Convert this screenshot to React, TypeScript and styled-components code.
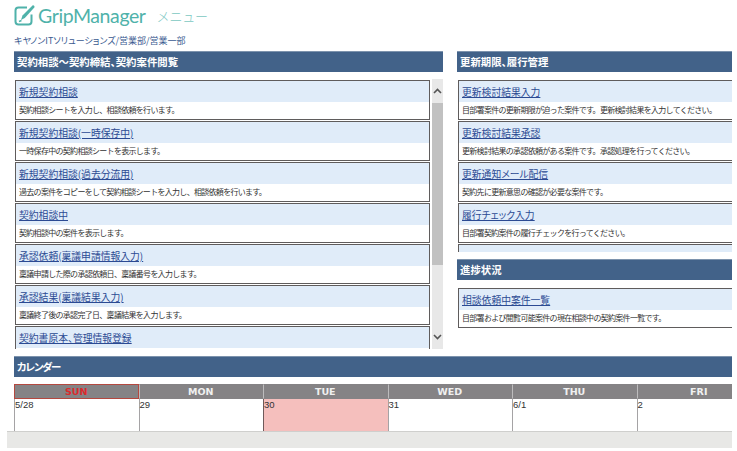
import React from 'react';
import styled, { createGlobalStyle } from 'styled-components';

const GlobalStyle = createGlobalStyle`
    html, body {
        background: #fff;
        margin: 0;
        overflow: hidden;
        padding: 0;
    }
    body {
        font-family: "Noto Sans CJK JP", "Liberation Sans", sans-serif;
    }
`;

const StyledPage = styled.div`
    height: 451px;
    overflow: hidden;
    padding-left: 7px;
    width: 725px;
`;

const StyledMain = styled.div`
    height: 431px;
    overflow: hidden;
    padding-left: 7px;
`;

const StyledBrand = styled.div`
    align-items: center;
    box-sizing: border-box;
    display: flex;
    height: 31px;
    padding-bottom: 1px;
`;

const StyledLogo = styled.svg`
    flex: none;
`;

const StyledProduct = styled.span`
    color: #4fb2aa;
    font-family: "Lato", sans-serif;
    font-size: 19.5px;
    font-weight: 400;
    letter-spacing: -0.4px;
    margin-left: 2px;
`;

const StyledMenuTitle = styled.span`
    color: #7cc8c2;
    font-size: 13px;
    font-weight: 300;
    letter-spacing: -0.2px;
    margin-left: 11px;
`;

const StyledOrg = styled.a`
    color: #3a5a90;
    display: block;
    font-feature-settings: "palt";
    font-size: 9px;
    height: 14px;
    line-height: 14px;
    margin-top: 3px;
`;

const StyledColumns = styled.div`
    display: grid;
    gap: 14px;
    grid-template-columns: 429px 275px;
    height: 298px;
    margin-top: 3px;
`;

const StyledColumn = styled.section`
    display: flex;
    flex-direction: column;
    min-width: 0;
`;

const StyledHeading = styled.h2`
    background: #426289;
    border-top: 1px solid #7d93ad;
    box-sizing: border-box;
    color: #fff;
    flex: none;
    font-feature-settings: "palt";
    font-size: 10.4px;
    font-weight: 700;
    height: 21px;
    line-height: 20px;
    margin: 0;
    padding-left: 3px;
`;

const StyledScrollArea = styled.div<{ $height: number }>`
    display: flex;
    flex: none;
    gap: 2px;
    height: ${props => props.$height}px;
    margin-top: 7px;
    overflow: hidden;
`;

const StyledList = styled.div`
    display: flex;
    flex: 1;
    flex-direction: column;
    gap: 1px;
    min-width: 0;
    overflow: hidden;
    padding: 1px 0 0 1px;
`;

const StyledCard = styled.article<{ $open?: boolean }>`
    border: 1px solid #5f5c5c;
    border-right: ${props => props.$open ? 'none' : '1px solid #5f5c5c'};
    box-sizing: border-box;
    flex: none;
    height: 40px;
`;

const StyledCardTitle = styled.div`
    background: #e0ecf9;
    box-sizing: border-box;
    font-feature-settings: "palt";
    font-size: 9.8px;
    height: 21px;
    line-height: 22px;
    padding-left: 3px;
`;

const StyledCardLink = styled.a`
    color: #2b4a93;
    text-decoration: underline;
`;

const StyledCardText = styled.div`
    color: #333;
    font-size: 8px;
    height: 17px;
    letter-spacing: -0.7px;
    line-height: 16px;
    padding-left: 3px;
    white-space: nowrap;
`;

const StyledScrollbar = styled.div`
    background: #e8e8e8;
    display: flex;
    flex: none;
    flex-direction: column;
    width: 11px;
`;

const StyledArrow = styled.div`
    align-items: center;
    display: flex;
    flex: none;
    height: 24px;
    justify-content: center;
`;

const StyledThumb = styled.div`
    background: #c1c1c1;
    flex: none;
    height: 162px;
`;

const StyledSpacer = styled.div`
    flex: 1;
`;

const StyledProgressHeading = styled(StyledHeading)`
    margin-top: 7px;
`;

const StyledProgressList = styled.div`
    margin-top: 8px;
    padding-left: 1px;
`;

const StyledCalendarHeading = styled(StyledHeading)`
    letter-spacing: -1.2px;
    margin-top: 7px;
`;

const StyledCalendar = styled.div`
    display: grid;
    grid-template-columns: repeat(6, 124.5px);
    margin-top: 7px;
    overflow: hidden;
    width: 718px;
`;

const StyledDayName = styled.div<{ $sunday?: boolean }>`
    background: #858385;
    border: 1px solid ${props => props.$sunday ? '#b4483f' : 'transparent'};
    border-left: 1px solid ${props => props.$sunday ? '#b4483f' : '#bdbcbd'};
    box-sizing: border-box;
    color: ${props => props.$sunday ? '#dc2a2c' : '#f0f0f0'};
    font-family: "DejaVu Sans", sans-serif;
    font-size: 9.5px;
    font-weight: 700;
    height: 15px;
    line-height: 13px;
    text-align: center;
`;

const StyledDay = styled.div<{ $today?: boolean }>`
    background: ${props => props.$today ? '#f5bfbd' : '#fff'};
    border-left: 1px solid ${props => props.$today ? '#6f5a5a' : '#a5a3a5'};
    box-sizing: border-box;
    color: #333;
    font-family: "Liberation Sans", sans-serif;
    font-size: 9.5px;
    height: 33px;
    line-height: 12px;
`;

const StyledFooter = styled.div`
    background: #e8e8e6;
    border-top: 1px solid #cfcfcd;
    box-sizing: border-box;
    height: 17px;
`;

type MenuItem = { title: string, text: string, open? : boolean };

const CONTRACT_ITEMS: MenuItem[] = [
    { title: '新規契約相談', text: '契約相談シートを入力し、相談依頼を行います。' },
    { title: '新規契約相談(一時保存中)', text: '一時保存中の契約相談シートを表示します。' },
    { title: '新規契約相談(過去分流用)', text: '過去の案件をコピーをして契約相談シートを入力し、相談依頼を行います。' },
    { title: '契約相談中', text: '契約相談中の案件を表示します。' },
    { title: '承認依頼(稟議申請情報入力)', text: '稟議申請した際の承認依頼日、稟議番号を入力します。' },
    { title: '承認結果(稟議結果入力)', text: '稟議終了後の承認完了日、稟議結果を入力します。' },
    { title: '契約書原本、管理情報登録', text: '' },
];

const RENEWAL_ITEMS: MenuItem[] = [
    { title: '更新検討結果入力', text: '目部署案件の更新期限が迫った案件です。更新検討結果を入力してください。' },
    { title: '更新検討結果承認', text: '更新検討結果の承認依頼がある案件です。承認処理を行ってください。' },
    { title: '更新通知メール配信', text: '契約先に更新意思の確認が必要な案件です。' },
    { title: '履行チェック入力', text: '目部署契約案件の履行チェックを行ってください。' },
    { title: '', text: '' },
];

const DAYS = [
    { name: 'SUN', date: '5/28' },
    { name: 'MON', date: '29' },
    { name: 'TUE', date: '30' },
    { name: 'WED', date: '31' },
    { name: 'THU', date: '6/1' },
    { name: 'FRI', date: '2' },
];

function Logo(){
    return <StyledLogo width="22" height="22" viewBox="0 0 22 22" fill="none">
        <path d="M13 3.5H4.5a3 3 0 0 0-3 3v11a3 3 0 0 0 3 3h10a3 3 0 0 0 3-3v-7" stroke="#4fb2aa" strokeWidth="2"/>
        <path d="M7 16l1.5-4.5L18.5 1.5c1-.8 2.6.8 1.8 1.9L10.8 14z" fill="#4fb2aa"/>
        <path d="M5 17.5l2.5-1" stroke="#4fb2aa" strokeWidth="1.5"/>
    </StyledLogo>
}

function Chevron({up} : {up? : boolean}){
    return <svg width="9" height="6" viewBox="0 0 9 6" fill="none">
        <path d={up ? "M1 5l3.5-3.5L8 5" : "M1 1l3.5 3.5L8 1"} stroke="#555" strokeWidth="1.6"/>
    </svg>
}

function Card({title, text, open} : MenuItem){
    return <StyledCard $open={open}>
        <StyledCardTitle><StyledCardLink href="#">{title}</StyledCardLink></StyledCardTitle>
        <StyledCardText>{text}</StyledCardText>
    </StyledCard>
}

export default function App(){
    return <StyledPage>
        <GlobalStyle />
        <StyledMain>
            <StyledBrand>
                <Logo />
                <StyledProduct>GripManager</StyledProduct>
                <StyledMenuTitle>メニュー</StyledMenuTitle>
            </StyledBrand>
            <StyledOrg>キヤノンITソリューションズ/営業部/営業一部</StyledOrg>
            <StyledColumns>
                <StyledColumn>
                    <StyledHeading>契約相談～契約締結、契約案件閲覧</StyledHeading>
                    <StyledScrollArea $height={270}>
                        <StyledList>
                            {CONTRACT_ITEMS.map(item => <Card key={item.title} {...item} />)}
                        </StyledList>
                        <StyledScrollbar>
                            <StyledArrow><Chevron up /></StyledArrow>
                            <StyledThumb />
                            <StyledSpacer />
                            <StyledArrow><Chevron /></StyledArrow>
                        </StyledScrollbar>
                    </StyledScrollArea>
                </StyledColumn>
                <StyledColumn>
                    <StyledHeading>更新期限、履行管理</StyledHeading>
                    <StyledScrollArea $height={173}>
                        <StyledList>
                            {RENEWAL_ITEMS.map((item, i) => <Card key={i} open {...item} />)}
                        </StyledList>
                    </StyledScrollArea>
                    <StyledProgressHeading>進捗状況</StyledProgressHeading>
                    <StyledProgressList>
                        <Card open title="相談依頼中案件一覧" text="目部署および閲覧可能案件の現在相談中の契約案件一覧です。" />
                    </StyledProgressList>
                </StyledColumn>
            </StyledColumns>
            <StyledCalendarHeading>カレンダー</StyledCalendarHeading>
            <StyledCalendar>
                {DAYS.map(day => <StyledDayName key={day.name} $sunday={day.name === 'SUN'}>{day.name}</StyledDayName>)}
                {DAYS.map(day => <StyledDay key={day.name} $today={day.name === 'TUE'}>{day.date}</StyledDay>)}
            </StyledCalendar>
        </StyledMain>
        <StyledFooter />
    </StyledPage>
}
